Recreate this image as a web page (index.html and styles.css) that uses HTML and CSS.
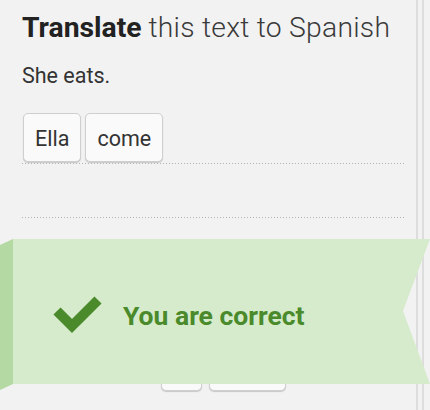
FILE: index.html
```html
<!DOCTYPE html>
<html lang="en">
<head>
<meta charset="utf-8">
<title>Translate</title>
<link rel="stylesheet" href="styles.css">
</head>
<body>
<div class="page">
  <main class="main">
    <h1 class="title"><strong>Translate</strong> <span class="title-rest">this text to Spanish</span></h1>
    <p class="prompt">She eats.</p>
    <div class="answer">
      <div class="answer-line">
        <span class="word">Ella</span>
        <span class="word">come</span>
      </div>
      <div class="answer-line answer-line--empty"></div>
    </div>
    <div class="bank">
      <span class="word word--slot">él</span>
      <span class="word word--slot">come</span>
    </div>
  </main>
  <div class="rail"></div>
</div>
<div class="banner">
  <div class="banner-fold"></div>
  <div class="banner-body">
    <svg class="check" viewBox="53 297 50 40" width="50" height="40" aria-hidden="true">
      <path d="M57 312 L72 327 L98 301" fill="none" stroke="#4a8a2b" stroke-width="10" stroke-linejoin="miter" stroke-linecap="butt"/>
    </svg>
    <span class="banner-text">You are correct</span>
  </div>
</div>
</body>
</html>
```
FILE: styles.css
```css
* { box-sizing: border-box; }
html, body { margin: 0; padding: 0; }
body {
  background: #f2f2f2;
  font-family: Roboto, "Noto Sans", sans-serif;
  width: 430px;
  height: 410px;
  overflow: hidden;
  position: relative;
}
.page {
  display: flex;
  height: 410px;
}
.main {
  width: 416px;
  padding: 12px 10px 0 22px;
}
.rail {
  width: 14px;
  border-left: 2px solid #dddddd;
}
.rail::after {
  content: "";
  display: block;
  margin-left: 4px;
  width: 2px;
  height: 100%;
  background: #dddddd;
}
.title {
  margin: 0;
  font-size: 28.3px;
  line-height: 32px;
  font-weight: 300;
  color: #3a3a3a;
  white-space: nowrap;
}
.title strong {
  font-weight: 700;
  color: #222;
}
.title-rest {
  letter-spacing: 0.25px;
}
.prompt {
  margin: 20px 0 0;
  font-size: 21.5px;
  line-height: 24px;
  color: #333;
}
.answer {
  margin-top: 25px;
}
.answer-line {
  display: flex;
  gap: 4px;
  height: 51px;
  padding-left: 1px;
  background: linear-gradient(to right, #b3b3b3 1px, transparent 1px) left bottom / 3px 1px repeat-x;
}
.answer-line--empty {
  height: 54px;
}
.word {
  display: inline-block;
  height: 49px;
  padding: 13px 11px 10px;
  font-size: 21.5px;
  line-height: 24px;
  color: #333;
  background: #fafafa;
  border: 1px solid #cfcfcf;
  border-radius: 5px;
  box-shadow: 0 1px 1px #c8c8c8;
}
.bank {
  display: flex;
  gap: 7px;
  margin-top: 124px;
  padding-left: 139px;
}
.word--slot {
  color: transparent;
}
.banner {
  position: absolute;
  left: 0;
  top: 239px;
  width: 430px;
  height: 151px;
}
.banner-fold {
  position: absolute;
  left: 0;
  top: 0;
  width: 13px;
  height: 151px;
  background: #b4d9a3;
  clip-path: polygon(0 6px, 13px 0, 13px 145px, 0 151px);
}
.banner-body {
  margin-left: 13px;
  height: 145px;
  background: #d5ebcc;
  clip-path: polygon(0 0, 417px 0, 390px 72px, 417px 145px, 0 145px);
  display: flex;
  align-items: flex-start;
  gap: 20px;
  padding: 61px 0 0 40px;
}
.check {
  display: block;
  margin-top: -4px;
  flex: none;
}
.banner-text {
  font-size: 26.5px;
  line-height: 32px;
  font-weight: 700;
  color: #4a8a2b;
}
```
